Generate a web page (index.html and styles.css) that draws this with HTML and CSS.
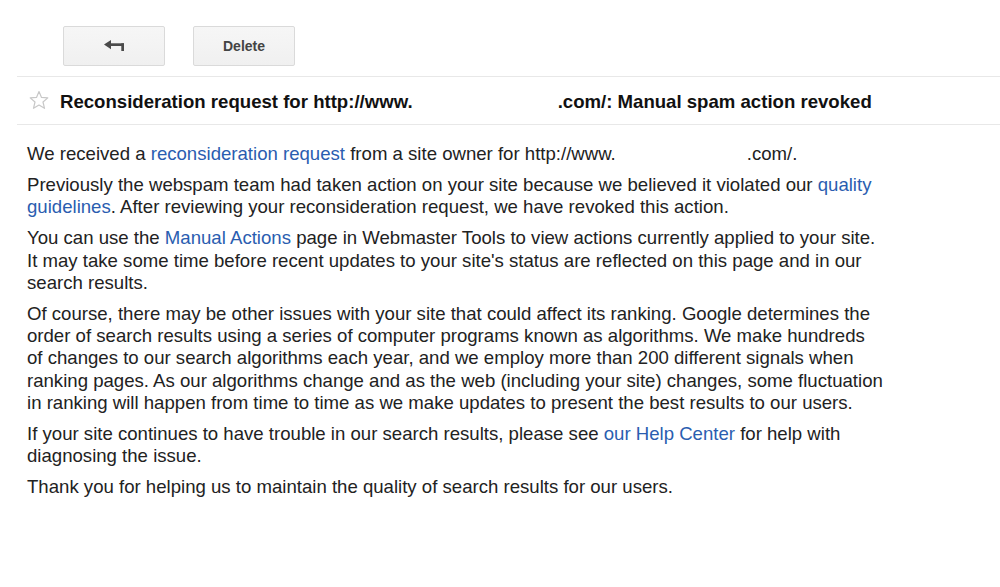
FILE: index.html
```html
<!DOCTYPE html>
<html>
<head>
<meta charset="utf-8">
<link rel="stylesheet" href="styles.css">
</head>
<body>
<div class="toolbar">
  <button class="btn" aria-label="Back">
    <svg class="back-icon" width="20" height="11" viewBox="0 0 20 11">
      <polygon points="0,4.6 7,0 7,9.2" fill="#4a4a4a"/>
      <rect x="6" y="3.3" width="14" height="2.7" fill="#4a4a4a"/>
      <rect x="17.3" y="3.3" width="2.7" height="7.7" fill="#4a4a4a"/>
    </svg>
  </button>
  <button class="btn btn-text">Delete</button>
</div>
<div class="header">
  <svg class="star" width="20" height="20" viewBox="0 0 20 20">
    <polygon points="10,1.5 12.5,7.4 18.8,7.9 14,12 15.5,18.3 10,15 4.5,18.3 6,12 1.2,7.9 7.5,7.4" fill="none" stroke="#c8c8c8" stroke-width="1.2" stroke-linejoin="round"/>
  </svg>
  <h1 class="subject">Reconsideration request for http://www.<span class="redact redact-title"></span>.com/: Manual spam action revoked</h1>
</div>
<div class="message">
  <p>We received a <a href="#">reconsideration request</a> from a site owner for http://www.<span class="redact redact-body"></span>.com/.</p>
  <p>Previously the webspam team had taken action on your site because we believed it violated our <a href="#">quality</a><br><a href="#">guidelines</a>. After reviewing your reconsideration request, we have revoked this action.</p>
  <p>You can use the <a href="#">Manual Actions</a> page in Webmaster Tools to view actions currently applied to your site.<br>It may take some time before recent updates to your site's status are reflected on this page and in our<br>search results.</p>
  <p>Of course, there may be other issues with your site that could affect its ranking. Google determines the<br>order of search results using a series of computer programs known as algorithms. We make hundreds<br>of changes to our search algorithms each year, and we employ more than 200 different signals when<br>ranking pages. As our algorithms change and as the web (including your site) changes, some fluctuation<br>in ranking will happen from time to time as we make updates to present the best results to our users.</p>
  <p>If your site continues to have trouble in our search results, please see <a href="#">our Help Center</a> for help with<br>diagnosing the issue.</p>
  <p>Thank you for helping us to maintain the quality of search results for our users.</p>
</div>
</body>
</html>
```

FILE: styles.css
```css
html, body {
  margin: 0;
  padding: 0;
  background: #ffffff;
}
body {
  font-family: "Liberation Sans", Arial, sans-serif;
  color: #222222;
  width: 1000px;
  height: 587px;
  overflow: hidden;
}
.toolbar {
  display: flex;
  gap: 28px;
  padding: 26px 0 0 63px;
  margin-bottom: 10px;
}
.btn {
  width: 102px;
  height: 40px;
  box-sizing: border-box;
  border: 1px solid #dadada;
  border-radius: 2px;
  background: linear-gradient(#f6f6f6, #f0f0f0);
  display: flex;
  align-items: center;
  justify-content: center;
  padding: 0;
  font-family: "Liberation Sans", Arial, sans-serif;
}
.back-icon {
  display: block;
  margin-bottom: 2px;
}
.btn-text {
  font-weight: bold;
  font-size: 14px;
  color: #444444;
}
.header {
  margin-left: 17px;
  height: 47px;
  border-top: 1px solid #e8e8e8;
  border-bottom: 1px solid #e8e8e8;
  display: flex;
  align-items: center;
  padding-left: 12px;
}
.star {
  display: block;
  margin-right: 11px;
  margin-top: -1px;
}
.subject {
  margin: 0;
  font-size: 18.6px;
  font-weight: bold;
  color: #111111;
  white-space: nowrap;
  padding-top: 2px;
}
.redact {
  display: inline-block;
}
.redact-title {
  width: 145px;
}
.redact-body {
  width: 131px;
}
.message {
  padding: 18px 0 0 27px;
  font-size: 18.6px;
  line-height: 22.3px;
}
.message p {
  margin: 0 0 8.7px 0;
  white-space: nowrap;
}
.message a {
  color: #2a5db0;
  text-decoration: none;
}
```
